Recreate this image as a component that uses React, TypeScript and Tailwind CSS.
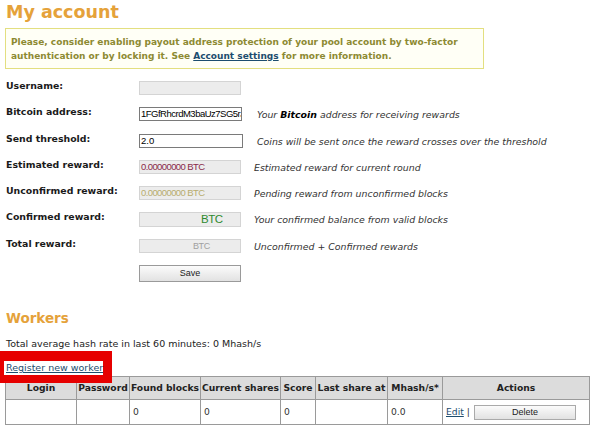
const FONT = "font-['DejaVu_Sans',Verdana,sans-serif]";
const ARIAL = "font-['Liberation_Sans',Arial,sans-serif]";

type Row = {
  label: string;
  field: React.ReactNode;
  desc?: React.ReactNode;
  shift?: boolean;
};

const ROWS: Row[] = [
  {
    label: "Username:",
    field: <div className="h-[14px] w-[102px] border border-[#d4d4d4] bg-[#ececec]" />,
  },
  {
    label: "Bitcoin address:",
    field: (
      <div className={`h-[14px] w-[103px] overflow-hidden whitespace-nowrap border border-[#7a7a7a] bg-white pl-[1px] text-[9.5px] tracking-[-0.5px] leading-[12px] text-black ${ARIAL}`}>
        1FGfRhcrdM3baUz7SG5rJ
      </div>
    ),
    desc: (
      <>
        Your <b className="text-black">Bitcoin</b> address for receiving rewards
      </>
    ),
  },
  {
    label: "Send threshold:",
    field: (
      <div className={`h-[14px] w-[104px] border border-[#7a7a7a] bg-white pl-[1px] text-[9.5px] leading-[12px] text-black ${ARIAL}`}>
        2.0
      </div>
    ),
    desc: "Coins will be sent once the reward crosses over the threshold",
  },
  {
    label: "Estimated reward:",
    field: (
      <div className={`h-[14px] w-[102px] border border-[#d4d4d4] bg-[#ececec] pl-[1px] text-[9.5px] tracking-[-0.6px] leading-[12px] text-[#8a2a4a] ${ARIAL}`}>
        0.00000000 BTC
      </div>
    ),
    desc: "Estimated reward for current round",
    shift: true,
  },
  {
    label: "Unconfirmed reward:",
    field: (
      <div className={`h-[14px] w-[102px] border border-[#d4d4d4] bg-[#ececec] pl-[1px] text-[9.5px] tracking-[-0.6px] leading-[12px] text-[#b8ad6e] ${ARIAL}`}>
        0.00000000 BTC
      </div>
    ),
    desc: "Pending reward from unconfirmed blocks",
    shift: true,
  },
  {
    label: "Confirmed reward:",
    field: (
      <div className={`h-[15px] w-[102px] border border-[#d4d4d4] bg-[#ececec] pl-[61px] text-[11.5px] tracking-[-0.5px] leading-[13px] text-[#2f8a2f] ${ARIAL}`}>
        BTC
      </div>
    ),
    desc: "Your confirmed balance from valid blocks",
    shift: true,
  },
  {
    label: "Total reward:",
    field: (
      <div className={`h-[14px] w-[102px] border border-[#d4d4d4] bg-[#ececec] pl-[53px] text-[9px] tracking-[-0.4px] leading-[12px] text-[#a0a0a0] ${ARIAL}`}>
        BTC
      </div>
    ),
    desc: "Unconfirmed + Confirmed rewards",
    shift: true,
  },
];

const COLS = [
  { name: "Login", w: "w-[71px]" },
  { name: "Password", w: "w-[53px]" },
  { name: "Found blocks", w: "w-[71px]" },
  { name: "Current shares", w: "w-[80px]" },
  { name: "Score", w: "w-[35px]" },
  { name: "Last share at", w: "w-[72px]" },
  { name: "Mhash/s*", w: "w-[55px]" },
  { name: "Actions", w: "w-[147px]" },
];

const cell = "border border-[#9a9a9a] p-0";

export default function App() {
  return (
    <div className={`h-[427px] w-[600px] overflow-hidden bg-white pl-[6px] pt-[1px] text-[#222] ${FONT}`}>
      <h1 className="text-[17.5px] font-bold leading-[22px] text-[#e5a23a]">My account</h1>

      <div className="ml-[-1px] mt-[5px] w-[479px] border border-[#e3df80] bg-[#fffff6] px-[5px] pb-[5px] pt-[6px] text-[9px] font-bold leading-[14px] text-[#8d8a32]">
        Please, consider enabling payout address protection of your pool account by two-factor
        <br />
        authentication or by locking it. See{" "}
        <a className="text-[#1d4d6e] underline">Account settings</a> for more information.
      </div>

      <div className="mt-[11px] flex flex-col">
        {ROWS.map((r) => (
          <div key={r.label} className="flex h-[26.3px] items-start">
            <div className="w-[133px] text-[9.4px] font-bold leading-[12px] text-[#1a1a1a]">{r.label}</div>
            <div className={r.shift ? "w-[115px] pt-[1px]" : "w-[118px] pt-[1px]"}>{r.field}</div>
            {r.desc && (
              <div className="pt-[3px] text-[9.4px] italic leading-[12px] text-[#333]">{r.desc}</div>
            )}
          </div>
        ))}
        <div className="ml-[133px] mt-[1px]">
          <div className={`flex h-[17px] w-[102px] items-center justify-center border border-[#9a9a9a] bg-gradient-to-b from-[#fbfbfb] to-[#e2e2e2] text-[9px] text-[#222] ${ARIAL}`}>
            Save
          </div>
        </div>
      </div>

      <h2 className="mt-[27px] text-[13.5px] font-bold leading-[18px] text-[#e5a23a]">Workers</h2>

      <div className="mt-[10px] text-[9.5px] leading-[14px] text-[#222]">
        Total average hash rate in last 60 minutes: 0 Mhash/s
      </div>

      <div className="relative z-10 ml-[-6px] w-[112px] border-b-[8px] border-l-[4px] border-r-[9px] border-t-[10px] border-[#e60000] bg-white py-[1px] pl-[2px]">
        <a className="block whitespace-nowrap text-[9.5px] leading-[12px] text-[#1d4d6e] underline">Register new worker</a>
      </div>

      <table className="ml-[-1px] mt-[-7px] w-[584px] table-fixed border-collapse text-[9.2px] leading-[12px]">
        <thead>
          <tr className="h-[23px] bg-[#dcdcdc]">
            {COLS.map((c) => (
              <th key={c.name} className={`${c.w} ${cell} text-center font-bold text-[#222]`}>
                {c.name}
              </th>
            ))}
          </tr>
        </thead>
        <tbody>
          <tr className="h-[25px] bg-white">
            <td className={cell} />
            <td className={cell} />
            <td className={`${cell} pl-[3px] text-[#333]`}>0</td>
            <td className={`${cell} pl-[3px] text-[#333]`}>0</td>
            <td className={`${cell} pl-[3px] text-[#333]`}>0</td>
            <td className={cell} />
            <td className={`${cell} pl-[3px] text-[#333]`}>0.0</td>
            <td className={`${cell} pl-[3px]`}>
              <div className="flex items-center">
                <a className="text-[#1d4d6e] underline">Edit</a>
                <span className="ml-[3px] text-[#333]">|</span>
                <div className={`ml-[4px] flex h-[15px] w-[102px] items-center justify-center border border-[#aaa] bg-gradient-to-b from-[#fbfbfb] to-[#e2e2e2] text-[9px] text-[#222] ${ARIAL}`}>
                  Delete
                </div>
              </div>
            </td>
          </tr>
        </tbody>
      </table>
    </div>
  );
}
